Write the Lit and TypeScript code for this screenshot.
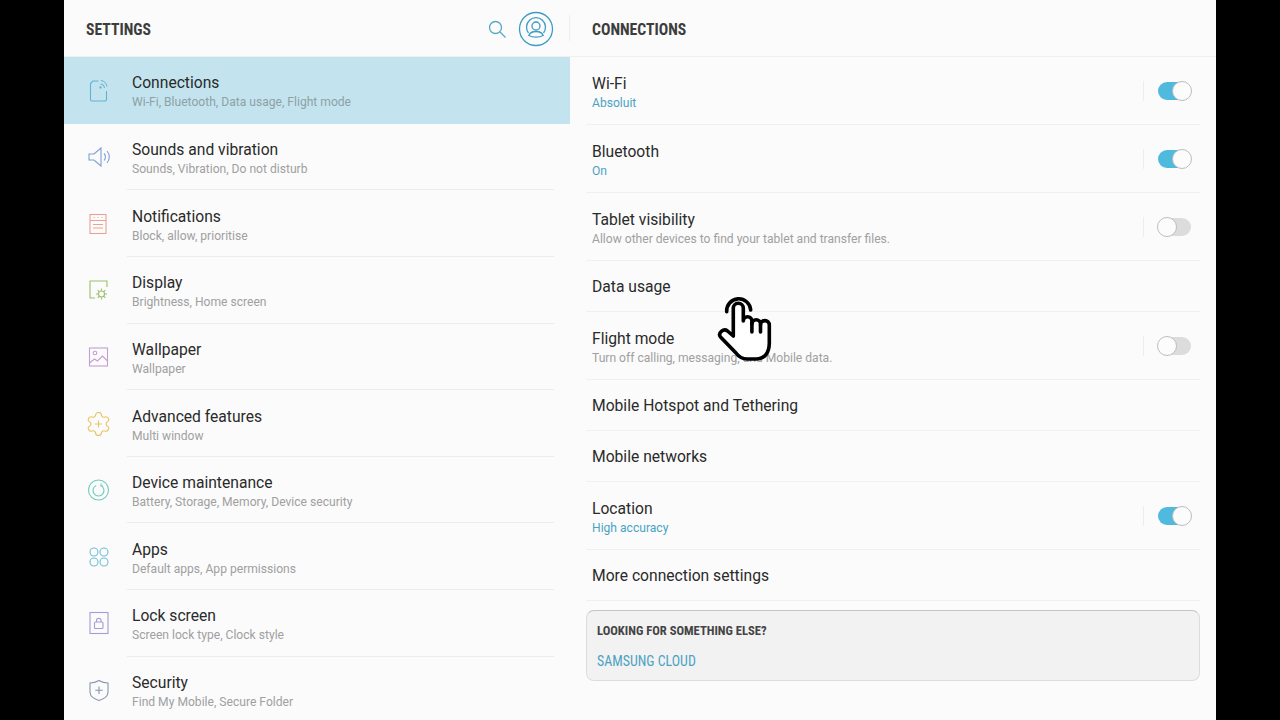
import {LitElement, css, html, svg} from 'lit';
import {customElement} from 'lit/decorators.js';

const icons: Record<string, unknown> = {
	connections: svg`<g stroke="#5fb2d6"><path d="M12.500 3H7L4.500 5.500v16A1.500 1.500 0 0 0 6 23h13a1.500 1.500 0 0 0 1.500-1.500V13"/><path d="M14.500 6a4 4 0 0 1 4 4M15 2.500a7.500 7.500 0 0 1 6 6" stroke-width="1"/><circle cx="14.500" cy="9.500" r=".6"/></g>`,
	sounds: svg`<g stroke="#7e9fd4"><path d="M3 9h5l7-6v18l-7-6H3z"/><path d="M18 8.500a5 5 0 0 1 0 7M21 6a9 9 0 0 1 0 12"/></g>`,
	notifications: svg`<g stroke="#e9a294"><rect x="4" y="2.500" width="16" height="19"/><path d="M4 8.500h16M7 12.500h10M7 16h10"/><path d="M7.500 5.500h1M11.500 5.500h1M15.500 5.500h1"/></g>`,
	display: svg`<g stroke="#9bc06a"><path d="M13 3H4v17h5M13 3h8v6"/><circle cx="15.500" cy="16" r="3"/><path d="M15.500 10.500v2M15.500 19.500v2M10 16h2M19 16h2M11.700 12.200l1.400 1.400M17.900 18.400l1.400 1.400M11.700 19.800l1.400-1.400M17.900 13.600l1.400-1.400"/></g>`,
	wallpaper: svg`<g stroke="#c49fd1"><rect x="3.500" y="3" width="18" height="18"/><circle cx="9" cy="8" r="1.800"/><path d="M3.500 18l5-4 3 2 5-5 5 5"/></g>`,
	advanced: svg`<g stroke="#e8c468"><path d="M9.500 3.500a2.600 2.600 0 0 1 6 0 2.600 2.600 0 0 0 3.500 1.500 2.800 2.800 0 0 1 3 4.500 2.600 2.600 0 0 0 0 5 2.800 2.800 0 0 1-3 4.500 2.600 2.600 0 0 0-3.500 1.500 2.600 2.600 0 0 1-6 0A2.600 2.600 0 0 0 6 19a2.800 2.800 0 0 1-3-4.500 2.600 2.600 0 0 0 0-5A2.800 2.800 0 0 1 6 5a2.600 2.600 0 0 0 3.500-1.500z"/><path d="M12.500 8.500v7M9 12h7"/></g>`,
	maintenance: svg`<g stroke="#72cbbc"><circle cx="12.500" cy="12" r="10"/><path d="M10.200 7.500a5.500 5.500 0 1 0 4.600 0M15.200 5.500L14.800 7.700l2.300.4"/></g>`,
	apps: svg`<g stroke="#6fbedb"><circle cx="8" cy="7" r="4"/><circle cx="18" cy="7" r="4"/><circle cx="8" cy="17" r="4"/><circle cx="18" cy="17" r="4"/></g>`,
	lock: svg`<g stroke="#a89ad8"><rect x="4" y="1.500" width="18" height="21"/><rect x="8.500" y="11" width="8.500" height="6.500" rx="1"/><path d="M10.500 11V9.500a2.200 2.200 0 0 1 4.500 0V11"/></g>`,
	security: svg`<g stroke="#8994ae"><path d="M4 5c3.500 0 6.500-1 9-2.500C15.500 4 18.500 5 22 5v9c0 4-4 7-9 8.500C8 21 4 18 4 14z"/><path d="M13 8.500v7.500M9.300 12.200h7.400"/></g>`
};

const menu = [
	{icon: 'connections', title: 'Connections', sub: 'Wi-Fi, Bluetooth, Data usage, Flight mode', active: true},
	{icon: 'sounds', title: 'Sounds and vibration', sub: 'Sounds, Vibration, Do not disturb'},
	{icon: 'notifications', title: 'Notifications', sub: 'Block, allow, prioritise'},
	{icon: 'display', title: 'Display', sub: 'Brightness, Home screen'},
	{icon: 'wallpaper', title: 'Wallpaper', sub: 'Wallpaper'},
	{icon: 'advanced', title: 'Advanced features', sub: 'Multi window'},
	{icon: 'maintenance', title: 'Device maintenance', sub: 'Battery, Storage, Memory, Device security'},
	{icon: 'apps', title: 'Apps', sub: 'Default apps, App permissions'},
	{icon: 'lock', title: 'Lock screen', sub: 'Screen lock type, Clock style'},
	{icon: 'security', title: 'Security', sub: 'Find My Mobile, Secure Folder'}
];

type Row = {title: string; sub?: string; accent?: boolean; toggle?: 'on' | 'off'};

const rows: Row[] = [
	{title: 'Wi-Fi', sub: 'Absoluit', accent: true, toggle: 'on'},
	{title: 'Bluetooth', sub: 'On', accent: true, toggle: 'on'},
	{title: 'Tablet visibility', sub: 'Allow other devices to find your tablet and transfer files.', toggle: 'off'},
	{title: 'Data usage'},
	{title: 'Flight mode', sub: 'Turn off calling, messaging, and Mobile data.', toggle: 'off'},
	{title: 'Mobile Hotspot and Tethering'},
	{title: 'Mobile networks'},
	{title: 'Location', sub: 'High accuracy', accent: true, toggle: 'on'},
	{title: 'More connection settings'}
];

@customElement('app-root')
export class AppRoot extends LitElement {
	static styles = css`
		:host {
			background: #000;
			display: block;
			font-family: Roboto, 'Liberation Sans', sans-serif;
			height: 720px;
			overflow: hidden;
			padding: 0 64px;
			position: relative;
		}

		.screen {
			background: #fbfbfb;
			display: grid;
			grid-template-columns: 506px 646px;
			height: 720px;
		}

		.head {
			align-items: center;
			border-bottom: 1px solid #f0f0f0;
			box-sizing: border-box;
			display: flex;
			height: 57px;
			padding-top: 1px;
			position: relative;
		}

		.left .head {
			padding-left: 22px;
			padding-right: 16px;
		}

		.right .head {
			padding-left: 22px;
			padding-right: 22px;
		}

		.head h1 {
			color: #3d3d3d;
			flex: 1;
			font-family: 'Liberation Sans Narrow', 'Roboto Condensed', Roboto, sans-serif;
			font-size: 15.700px;
			font-weight: 700;
			margin: 2px 0 0;
		}

		.search {
			display: block;
			height: 20px;
			margin-right: 11px;
			width: 20px;
		}

		.avatar {
			display: block;
			height: 36px;
			width: 36px;
		}

		.left .head::after {
			background: #eeeeee;
			content: '';
			height: 26px;
			position: absolute;
			right: 0;
			top: 15px;
			width: 1px;
		}

		.menu-item {
			box-sizing: border-box;
			display: flex;
			height: 66.650px;
			position: relative;
		}

		.menu-item.active {
			background: #c3e4ee;
		}

		.menu-item .ico {
			align-items: center;
			display: flex;
			flex: none;
			justify-content: center;
			width: 68px;
		}

		.menu-item svg {
			height: 24px;
			width: 25px;
		}

		.menu-item svg g {
			fill: none;
			stroke-width: 1.100;
		}

		.menu-text {
			border-bottom: 1px solid #ececec;
			display: flex;
			flex: 1;
			flex-direction: column;
			justify-content: center;
			margin-left: -5px;
			margin-right: 16px;
			padding-left: 5px;
			padding-top: 5px;
		}

		.menu-item.active .menu-text,
		.menu-item:nth-child(2) .menu-text {
			border-bottom-color: transparent;
		}

		.title {
			color: #2a2a2a;
			font-size: 15.650px;
			line-height: 20px;
		}

		.sub {
			color: #a0a0a0;
			font-size: 12.100px;
			line-height: 17px;
			margin-top: 1px;
		}

		.menu-item.active .sub {
			color: #8ea0a6;
		}

		.rows {
			padding: 0 16px;
		}

		.row {
			align-items: center;
			border-bottom: 1px solid #f0f0f0;
			box-sizing: border-box;
			display: flex;
			height: 51px;
			padding: 2px 9px 0 6px;
		}

		.row.two {
			height: 68px;
			padding-top: 5px;
		}

		.row-text {
			flex: 1;
		}

		.sub.accent {
			color: #4ba3c3;
		}

		.toggle {
			align-items: center;
			border-left: 1px solid #ededed;
			display: flex;
			height: 20px;
			margin-top: -5px;
			padding-left: 14px;
		}

		.track {
			background: #dcdcdc;
			border-radius: 9px;
			height: 18px;
			position: relative;
			width: 33px;
		}

		.toggle.on .track {
			background: #4fbade;
		}

		.knob {
			background: #fcfcfc;
			border: 1px solid #bdbdbd;
			border-radius: 50%;
			box-sizing: border-box;
			height: 20px;
			left: -1px;
			position: absolute;
			top: -1px;
			width: 20px;
		}

		.toggle.on .knob {
			left: auto;
			right: -1px;
		}

		.card {
			background: #f2f2f2;
			border: 1px solid #dcdcdc;
			border-radius: 8px;
			border-top-color: #c4c4c4;
			box-sizing: border-box;
			height: 71px;
			margin: 9px 16px 0;
			padding: 12px 10px;
		}

		.card h2,
		.card a {
			display: block;
			font-family: 'Liberation Sans Narrow', 'Roboto Condensed', Roboto, sans-serif;
			line-height: 16px;
			margin: 0;
		}

		.card h2 {
			color: #444;
			font-size: 12.600px;
			font-weight: 700;
		}

		.card a {
			color: #4ba3c3;
			font-size: 13.900px;
			margin-top: 14px;
		}

		.hand {
			height: 66px;
			left: 715px;
			position: absolute;
			top: 295px;
			width: 58px;
		}
	`;

	render() {
		return html`
			<div class="screen">
				<section class="left">
					<header class="head">
						<h1>SETTINGS</h1>
						<svg class="search" viewBox="0 0 20 20" fill="none" stroke="#55a9c4" stroke-width="1.300">
							<circle cx="8.500" cy="8.500" r="6" />
							<path d="M13 13l5.500 5.500" />
						</svg>
						<svg class="avatar" viewBox="0 0 36 36" fill="none" stroke="#3d9cc4" stroke-width="1.300">
							<circle cx="18" cy="18" r="16.500" />
							<circle cx="18" cy="15" r="4" />
							<path d="M10.800 24.500c1-2.500 3.500-4 7.200-4s6.200 1.500 7.200 4c-1.800 1-4.300 1.700-7.200 1.700s-5.400-.7-7.200-1.700z" />
							<path d="M10.500 22a9.500 9.500 0 1 1 15 0" />
						</svg>
					</header>
					${menu.map(
						(m) => html`
							<div class="menu-item ${m.active ? 'active' : ''}">
								<div class="ico"><svg viewBox="0 0 25 24">${icons[m.icon]}</svg></div>
								<div class="menu-text">
									<div class="title">${m.title}</div>
									<div class="sub">${m.sub}</div>
								</div>
							</div>
						`
					)}
				</section>
				<section class="right">
					<header class="head"><h1>CONNECTIONS</h1></header>
					<div class="rows">
						${rows.map(
							(r) => html`
								<div class="row ${r.sub ? 'two' : ''}">
									<div class="row-text">
										<div class="title">${r.title}</div>
										${r.sub ? html`<div class="sub ${r.accent ? 'accent' : ''}">${r.sub}</div>` : null}
									</div>
									${r.toggle
										? html`<div class="toggle ${r.toggle}"><div class="track"><div class="knob"></div></div></div>`
										: null}
								</div>
							`
						)}
					</div>
					<div class="card">
						<h2>LOOKING FOR SOMETHING ELSE?</h2>
						<a>SAMSUNG CLOUD</a>
					</div>
				</section>
			</div>
			<svg class="hand" viewBox="0 0 58 66" fill="#fff" stroke="#000" stroke-width="3.600" stroke-linejoin="round" stroke-linecap="round">
				<path d="M18.300 41V13.300a5 5 0 0 1 10 0V26a4.300 4.300 0 0 1 8.600 0v3a4.300 4.300 0 0 1 8.600 0v1a4.400 4.400 0 0 1 8.800 0V48c0 10-5 16-13 16H32c-5 0-8-2-11-6L5.500 42c-3-4 3-9 7-6z" />
				<path d="M11.700 16.700a12 12 0 0 1 24-1.700" fill="none" />
				<path d="M36.900 28v9M45.500 30v7" fill="none" />
			</svg>
		`;
	}
}
